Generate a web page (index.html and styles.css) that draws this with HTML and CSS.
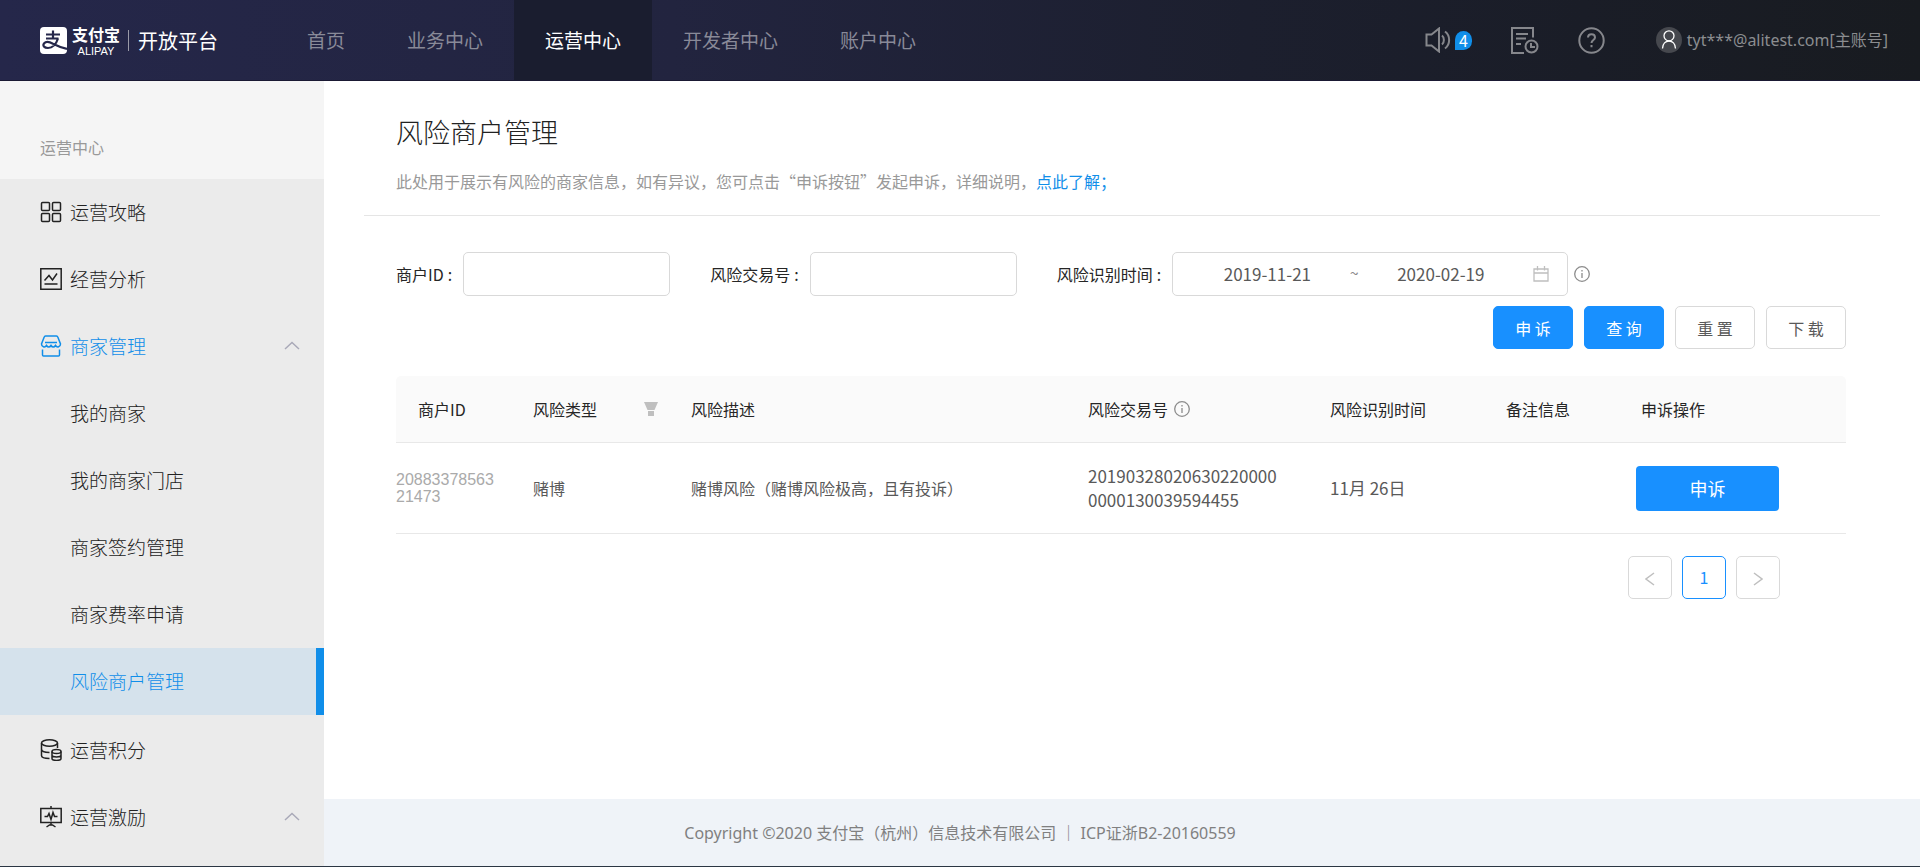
FILE: index.html
```html
<!DOCTYPE html>
<html lang="zh-CN">
<head>
    <meta charset="UTF-8">
    <meta name="viewport" content="width=device-width, initial-scale=1.0">
    <title>风险商户管理</title>
    <link rel="stylesheet" href="styles.css">
</head>
<body>
    <header class="header">
        <a class="logo" href="#">
            <svg class="logo-icon" viewBox="0 0 27 27">
                <rect width="27" height="27" rx="4" fill="#fff"/>
                <path d="M6 7.500h14M13 3.500v8M6 11.500h12.500M18 11.500c-1.500 4.500-5 9.500-10 9.500-4 0-5.500-2.500-4-4.500 2-2.500 6-1.500 9 .2 4 2 8 4 14 5.300" fill="none" stroke="#25274a" stroke-width="2.200"/>
            </svg>
            <span class="logo-name">
                <span class="logo-cn">支付宝</span>
                <span class="logo-en">ALIPAY</span>
            </span>
            <span class="logo-platform">开放平台</span>
        </a>
        <nav class="nav">
            <a href="#">首页</a>
            <a href="#">业务中心</a>
            <a href="#" class="active">运营中心</a>
            <a href="#">开发者中心</a>
            <a href="#">账户中心</a>
        </nav>
        <div class="tools">
            <button type="button" class="tool" aria-label="消息">
                <svg width="28" height="26" viewBox="0 0 28 26" fill="none" stroke="#86878c" stroke-width="2">
                    <path d="M1.500 7.500h5L14 1.500v23l-7.500-6h-5z"/>
                    <path d="M17 8.500c2.500 2 2.500 7 0 9M20 4.500c5.500 4 5.500 13 0 17"/>
                </svg>
                <span class="badge">4</span>
            </button>
            <button type="button" class="tool" aria-label="日志">
                <svg width="28" height="27" viewBox="0 0 28 27" fill="none" stroke="#86878c" stroke-width="2">
                    <path d="M22 10.500V1H1v25h12M5 7h12M5 11.500h10M5 17h5"/>
                    <circle cx="20.500" cy="19.500" r="6"/>
                    <path d="M20 16v4h4"/>
                </svg>
            </button>
            <button type="button" class="tool" aria-label="帮助">
                <svg width="27" height="27" viewBox="0 0 27 27" fill="none" stroke="#86878c" stroke-width="2">
                    <circle cx="13.500" cy="13.500" r="12.200"/>
                    <path d="M10 10.500c0-4.500 7-4.500 7 0 0 2.500-3.500 2.500-3.500 5.500M13.500 18v2.200"/>
                </svg>
            </button>
            <a class="user" href="#">
                <svg width="26" height="26" viewBox="0 0 26 26" fill="none" stroke="#fff" stroke-width="1.300">
                    <circle cx="13" cy="13" r="13" fill="#46484e" stroke="none"/>
                    <circle cx="13" cy="8.800" r="5"/>
                    <path d="M6.500 21.500c0-10 13-10 13 0"/>
                </svg>
                tyt***@alitest.com[主账号]
            </a>
        </div>
    </header>

    <div class="page">
        <aside class="sidebar">
            <div class="sidebar-title">运营中心</div>
            <nav class="menu">
                <a href="#">
                    <svg class="menu-icon" viewBox="0 0 22 22">
                        <rect x="1.500" y="1.500" width="8" height="8" rx="1"/>
                        <rect x="12.500" y="1.500" width="8" height="8" rx="1"/>
                        <rect x="1.500" y="12.500" width="8" height="8" rx="1"/>
                        <rect x="12.500" y="12.500" width="8" height="8" rx="1"/>
                    </svg>
                    运营攻略
                </a>
                <a href="#">
                    <svg class="menu-icon" viewBox="0 0 22 22">
                        <path d="M.8.800h20.400v20.400H.800zM4.500 12.500l4.500-5 3.500 4.500 4.500-6.500M4.500 16h13"/>
                    </svg>
                    经营分析
                </a>
                <a href="#" class="open">
                    <svg class="menu-icon" viewBox="0 0 22 22">
                        <path d="M5.500 1h11q1 0 1.300 1l2.700 7c0 3-3.500 4-5 1.500-1.200 2-3.300 2-4.500 0-1.200 2-3.300 2-4.500 0C5 13 1.500 12 1.500 9l2.700-7q.3-1 1.300-1zM5 7.500h12M2.500 14.500v5.500q0 1 1 1h15q1 0 1-1v-5.500"/>
                    </svg>
                    商家管理
                    <svg class="arrow" viewBox="0 0 16 9"><path d="M1 8l7-6.500L15 8"/></svg>
                </a>
                <div class="submenu">
                    <a href="#">我的商家</a>
                    <a href="#">我的商家门店</a>
                    <a href="#">商家签约管理</a>
                    <a href="#">商家费率申请</a>
                    <a href="#" class="active">风险商户管理</a>
                </div>
                <a href="#">
                    <svg class="menu-icon" viewBox="0 0 22 22">
                        <ellipse cx="9.500" cy="4" rx="8" ry="3.200"/>
                        <path d="M1.500 4v12.500c0 2 3 3 8 3M17.500 4v5M1.500 10c0 2 3 3.500 8 3.500"/>
                        <ellipse cx="16.500" cy="12.500" rx="4.500" ry="2"/>
                        <path d="M12 12.500v7c0 2.500 9 2.500 9 0v-7M12 16c0 2.500 9 2.500 9 0"/>
                    </svg>
                    运营积分
                </a>
                <a href="#">
                    <svg class="menu-icon" viewBox="0 0 22 22">
                        <path d="M.8 2.500h20.400v14H.800zM11 0v2.500M11 16.500v3M6.500 21l3-2h3l3 2M4.500 10.500h3l1.500-3 2 6 2-7 1.500 4h3"/>
                    </svg>
                    运营激励
                    <svg class="arrow" viewBox="0 0 16 9"><path d="M1 8l7-6.500L15 8"/></svg>
                </a>
            </nav>
        </aside>

        <div class="content">
            <main class="main">
                <div class="page-head">
                    <h1>风险商户管理</h1>
                    <p>此处用于展示有风险的商家信息，如有异议，您可点击“申诉按钮”发起申诉，详细说明，<a href="#">点此了解；</a></p>
                </div>

                <div class="panel">
                    <form class="search">
                        <div class="fields">
                            <div class="field">
                                <label for="merchant-id">商户ID</label>
                                <input type="text" id="merchant-id">
                            </div>
                            <div class="field">
                                <label for="trade-no">风险交易号</label>
                                <input type="text" id="trade-no">
                            </div>
                            <div class="field">
                                <label for="date-start">风险识别时间</label>
                                <div class="date-range">
                                    <input type="text" id="date-start" value="2019-11-21">
                                    <span class="tilde">~</span>
                                    <input type="text" id="date-end" value="2020-02-19" aria-label="结束时间">
                                    <svg class="calendar" viewBox="0 0 16 16">
                                        <path d="M1 3h14v12H1zM1 7h14M4.500 0v4.500M11.500 0v4.500"/>
                                    </svg>
                                </div>
                                <svg class="info" viewBox="0 0 16 16"><circle cx="8" cy="8" r="7.300"/><path d="M8 7v5M8 4v1.500"/></svg>
                            </div>
                        </div>
                        <div class="actions">
                            <button type="button" class="btn primary">申 诉</button>
                            <button type="submit" class="btn primary">查 询</button>
                            <button type="reset" class="btn">重 置</button>
                            <button type="button" class="btn">下 载</button>
                        </div>
                    </form>

                    <table class="table">
                        <colgroup>
                            <col class="col-id">
                            <col class="col-type">
                            <col>
                            <col class="col-trade">
                            <col class="col-time">
                            <col class="col-remark">
                            <col class="col-action">
                        </colgroup>
                        <thead>
                            <tr>
                                <th>商户ID</th>
                                <th>
                                    <div class="th-filter">
                                        风险类型
                                        <svg width="14" height="14" viewBox="0 0 14 14" fill="#bfbfbf"><path d="M0 0h14l-3.500 8h-7zM4 9h6v5H4z"/></svg>
                                    </div>
                                </th>
                                <th>风险描述</th>
                                <th>
                                    <div class="th-info">
                                        风险交易号
                                        <svg class="info" viewBox="0 0 16 16"><circle cx="8" cy="8" r="7.300"/><path d="M8 7v5M8 4v1.500"/></svg>
                                    </div>
                                </th>
                                <th>风险识别时间</th>
                                <th>备注信息</th>
                                <th>申诉操作</th>
                            </tr>
                        </thead>
                        <tbody>
                            <tr>
                                <td class="merchant">20883378563<br>21473</td>
                                <td>赌博</td>
                                <td>赌博风险（赌博风险极高，且有投诉）</td>
                                <td class="trade">20190328020630220000<br>0000130039594455</td>
                                <td class="time">11月 26日</td>
                                <td></td>
                                <td class="action"><button type="button" class="btn-appeal">申诉</button></td>
                            </tr>
                        </tbody>
                    </table>

                    <div class="pagination">
                        <button type="button" aria-label="上一页"><svg viewBox="0 0 10 14"><path d="M9 1L1 7l8 6"/></svg></button>
                        <button type="button" class="current">1</button>
                        <button type="button" aria-label="下一页"><svg viewBox="0 0 10 14"><path d="M1 1l8 6-8 6"/></svg></button>
                    </div>
                </div>
            </main>
            <footer class="footer">Copyright ©2020 支付宝（杭州）信息技术有限公司 ｜ ICP证浙B2-20160559</footer>
        </div>
    </div>
</body>
</html>
```
FILE: styles.css
```css
* {
    box-sizing: border-box;
}

body {
    font-family: "Noto Sans CJK SC", "Noto Sans", sans-serif;
    font-size: 16px;
    line-height: 24px;
    color: #595959;
    background-color: #fff;
    margin: 0;
    display: flex;
    flex-direction: column;
    min-height: 100vh;
    border-bottom: 1px solid #2b3643;
}

a {
    text-decoration: none;
    color: #108ee9;
}

button, input {
    font-family: inherit;
    font-size: 16px;
}

button {
    cursor: pointer;
}

/* header */
.header {
    display: flex;
    height: 81px;
    background: linear-gradient(90deg, #25274a 0%, #22243f 35%, #1c1f2e 65%, #181b20 100%);
    border-bottom: 1px solid #1a1933;
}

.logo {
    display: flex;
    align-items: center;
    width: 276px;
    padding-left: 40px;
    color: #fff;
}

.logo-icon {
    width: 27px;
    height: 27px;
}

.logo-name {
    display: flex;
    flex-direction: column;
    margin: 0 8px 0 5px;
}

.logo-cn {
    font-size: 16px;
    font-weight: bold;
    line-height: 20px;
}

.logo-en {
    margin-top: 2px;
    font-family: "Liberation Sans", Arial, sans-serif;
    font-size: 11px;
    line-height: 10px;
    text-align: center;
}

.logo-platform {
    padding-left: 9px;
    border-left: 1px solid #9a9aa8;
    font-size: 20px;
    line-height: 21px;
}

.nav {
    display: flex;
}

.nav a {
    padding: 0 31px;
    font-size: 19px;
    line-height: 80px;
    color: #898a98;
}

.nav a.active {
    color: #fff;
    background-color: #1a1d2f;
}

.tools {
    display: flex;
    align-items: center;
    gap: 39px;
    margin-left: auto;
    padding-right: 32px;
}

.tool {
    display: flex;
    align-items: center;
    padding: 0;
    border: none;
    background: none;
}

.badge {
    width: 17px;
    margin-left: 2px;
    border-radius: 9px 9px 9px 0;
    background-color: #108ee9;
    color: #fff;
    line-height: 19px;
}

.user {
    display: flex;
    align-items: center;
    gap: 5px;
    margin-left: 12px;
    font-family: "Noto Sans", "Noto Sans CJK SC", sans-serif;
    color: #8b8d90;
}

/* sidebar */
.page {
    display: flex;
    flex: 1;
}

.sidebar {
    display: flex;
    flex-direction: column;
    width: 324px;
    flex-shrink: 0;
    background-color: #f5f5f5;
}

.sidebar-title {
    padding: 54px 40px 20px;
    color: #999;
}

.menu {
    flex: 1;
    background-color: #ebebeb;
}

.menu a {
    display: flex;
    align-items: center;
    height: 67px;
    padding: 0 24px 2px 40px;
    font-size: 19px;
    font-weight: 300;
    color: #222;
}

.menu a.open {
    color: #108ee9;
}

.menu-icon {
    width: 22px;
    height: 22px;
    margin-right: 8px;
    fill: none;
    stroke: currentColor;
    stroke-width: 1.5;
}

.arrow {
    width: 16px;
    height: 9px;
    margin-left: auto;
    fill: none;
    stroke: #a9a9b8;
    stroke-width: 1.5;
}

.submenu {
    margin-bottom: 2px;
}

.submenu a {
    padding-left: 70px;
}

.submenu a.active {
    color: #108ee9;
    background-color: #d5e2ec;
    border-right: 8px solid #108ee9;
}

/* content */
.content {
    display: flex;
    flex-direction: column;
    flex: 1;
    min-width: 0;
}

.main {
    flex: 1;
    padding: 0 40px;
}

.page-head {
    padding: 31px 32px 22px;
    border-bottom: 1px solid #e5e5e5;
}

.page-head h1 {
    margin: 0 0 17px;
    font-size: 27px;
    font-weight: 300;
    line-height: 40px;
    color: #222;
}

.page-head p {
    margin: 0;
    color: #999;
}

.panel {
    padding: 36px 34px 36px 32px;
}

.fields {
    display: flex;
    flex-wrap: wrap;
    gap: 40px;
    margin-bottom: 10px;
}

.field {
    display: flex;
    align-items: center;
}

.field label {
    color: #262626;
}

.field label::after {
    content: ":";
    margin: 0 11px 0 4px;
}

.field > input {
    width: 207px;
    height: 44px;
    padding: 0 12px;
    border: 1px solid #d9d9d9;
    border-radius: 5px;
}

.date-range {
    display: flex;
    align-items: center;
    width: 396px;
    height: 44px;
    padding: 0 18px 0 12px;
    border: 1px solid #d9d9d9;
    border-radius: 5px;
}

.date-range input {
    flex: 1;
    min-width: 0;
    padding: 0 0 2px;
    border: none;
    font-size: 17px;
    text-align: center;
    color: #595959;
}

.tilde {
    padding-bottom: 4px;
    color: #8c8c8c;
}

.calendar {
    width: 16px;
    height: 16px;
    margin-left: 10px;
    fill: none;
    stroke: #bfbfbf;
    stroke-width: 1.3;
}

.info {
    width: 16px;
    height: 16px;
    margin-left: 6px;
    fill: none;
    stroke: #8c8c8c;
    stroke-width: 1.3;
}

.actions {
    display: flex;
    justify-content: flex-end;
    gap: 11px;
    margin-bottom: 27px;
}

.btn {
    width: 80px;
    height: 43px;
    padding: 0;
    border: 1px solid #d9d9d9;
    border-radius: 5px;
    background-color: #fff;
    color: #595959;
}

.btn.primary {
    border-color: #1890ff;
    background-color: #1890ff;
    color: #fff;
}

/* table */
.table {
    width: 100%;
    table-layout: fixed;
    border-collapse: separate;
    border-spacing: 0;
    text-align: left;
}

.col-id {
    width: 115px;
}

.col-type {
    width: 158px;
}

.col-trade {
    width: 242px;
}

.col-time {
    width: 176px;
}

.col-remark {
    width: 135px;
}

.col-action {
    width: 227px;
}

.table th {
    height: 67px;
    padding: 0 0 0 22px;
    border-bottom: 1px solid #e8e8e8;
    background-color: #fafafa;
    font-weight: normal;
    color: #262626;
}

.table th:first-child {
    border-top-left-radius: 5px;
}

.table th:last-child {
    border-top-right-radius: 5px;
}

.th-filter {
    display: flex;
    align-items: center;
    justify-content: space-between;
    padding-right: 11px;
}

.th-info {
    display: flex;
    align-items: center;
}

.table td {
    height: 91px;
    padding: 0 0 0 22px;
    border-bottom: 1px solid #e8e8e8;
}

.table td.merchant {
    padding-left: 0;
    font-family: "Liberation Sans", Arial, sans-serif;
    line-height: 17px;
    color: #aaa;
}

.table td.trade,
.table td.time {
    font-size: 17px;
}

.table td.action {
    padding-left: 17px;
}

.btn-appeal {
    width: 143px;
    height: 45px;
    border: none;
    border-radius: 4px;
    background-color: #1890ff;
    font-size: 18px;
    color: #fff;
}

.pagination {
    display: flex;
    justify-content: flex-end;
    gap: 10px;
    margin-top: 22px;
    padding-right: 66px;
}

.pagination button {
    width: 44px;
    height: 43px;
    padding: 0 0 2px;
    border: 1px solid #d9d9d9;
    border-radius: 5px;
    background-color: #fff;
}

.pagination button.current {
    border-color: #1890ff;
    color: #1890ff;
}

.pagination svg {
    width: 10px;
    height: 14px;
    fill: none;
    stroke: #bfbfbf;
    stroke-width: 1.5;
    vertical-align: middle;
}

/* footer is centered on the window, so the sidebar width is kept free on the right */
.footer {
    padding: 22px 324px 21px 0;
    background-color: #eff3f8;
    font-family: "Noto Sans", "Noto Sans CJK SC", sans-serif;
    text-align: center;
    color: #808080;
}
```
